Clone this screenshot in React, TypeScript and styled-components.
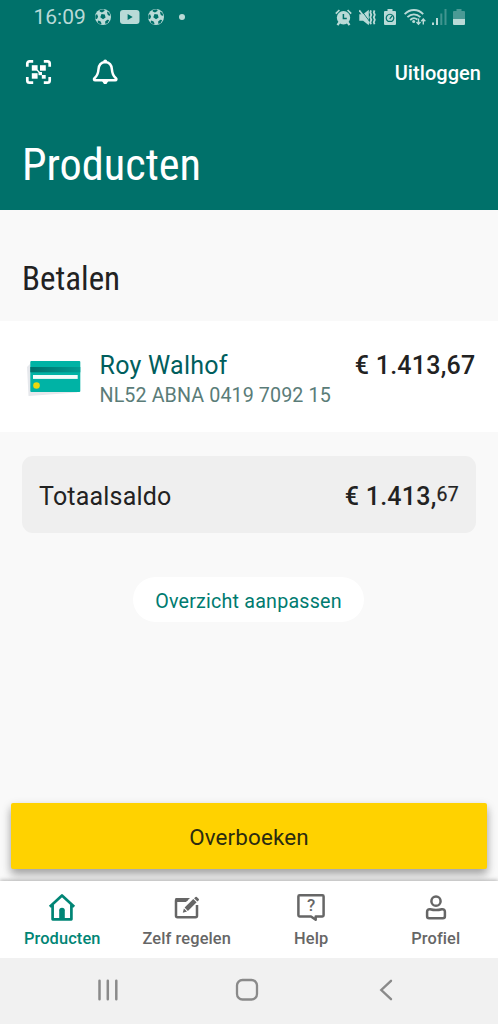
import React from "react";
import styled, { createGlobalStyle } from "styled-components";

const Global = createGlobalStyle`
  * { box-sizing: border-box; }
  html, body { margin: 0; padding: 0; }
  body { font-family: Roboto, "Liberation Sans", sans-serif; background: #f9f9f9; }
  button { font: inherit; border: 0; padding: 0; background: none; color: inherit; cursor: pointer; }
  svg { display: block; flex: none; }
`;

const Screen = styled.div`
  width: 498px;
  height: 1024px;
  display: flex;
  flex-direction: column;
  background: #f9f9f9;
  color: #222;
  overflow: hidden;
`;

const Header = styled.header`
  height: 210px;
  background: #00716a;
  color: #fff;
`;

const StatusBar = styled.div`
  height: 34px;
  padding: 0 33px 0 33.5px;
  display: flex;
  align-items: center;
  justify-content: space-between;
  color: #b9dad7;
`;

const StatusGroup = styled.div`
  display: flex;
  align-items: center;
`;

const Clock = styled.span`
  font-size: 21px;
  line-height: 36px;
  width: 61px;
`;

const Toolbar = styled.div`
  height: 76px;
  padding: 0 17px 0 25px;
  display: flex;
  align-items: center;
  gap: 40px;
`;

const Logout = styled.button`
  && { font-size: 20px; font-weight: 500; line-height: 24px; letter-spacing: 0.05px; }
  margin-left: auto;
  padding-top: 2px;
`;

const Title = styled.h1`
  margin: 30px 0 0 22px;
  font-family: "Roboto Condensed", Roboto, sans-serif;
  font-size: 44.3px;
  font-weight: 400;
  line-height: 50px;
`;

const Main = styled.main`
  flex: 1;
  display: flex;
  flex-direction: column;
`;

const SectionTitle = styled.h2`
  margin: 50px 0 23px 22px;
  font-family: "Roboto Condensed", Roboto, sans-serif;
  font-size: 33px;
  font-weight: 400;
  line-height: 38px;
`;

const AccountRow = styled.section`
  height: 111px;
  padding: 30px 22.5px 0 27px;
  display: flex;
  align-items: flex-start;
  background: #fff;
`;

const CardPicture = styled.div`
  width: 72.5px;
  padding-top: 7px;
`;

const AccountText = styled.div`
  flex: 1;
`;

const Name = styled.div`
  font-size: 25px;
  line-height: 30px;
  letter-spacing: 0.25px;
  color: #005e5d;
`;

const Iban = styled.div`
  font-size: 19.7px;
  line-height: 30px;
  letter-spacing: 0.1px;
  color: #5a7c78;
`;

const Amount = styled.div`
  display: flex;
  font-size: 25px;
  font-weight: 500;
  line-height: 30px;
  letter-spacing: 0.25px;
`;

const Cents = styled.span`
  font-size: 19.5px;
  font-weight: 400;
  line-height: 26px;
  -webkit-text-stroke: 0.25px currentColor;
`;

const TotalBox = styled.section`
  margin: 24px 22px 0;
  height: 77px;
  padding: 5px 17px 0 17px;
  display: flex;
  align-items: center;
  justify-content: space-between;
  background: #efefef;
  border-radius: 11px;
`;

const TotalLabel = styled.span`
  font-size: 25px;
  line-height: 30px;
  letter-spacing: 0.2px;
`;

const Pill = styled.button`
  && { font-size: 19.7px; line-height: 24px; letter-spacing: 0.2px; color: #007b70; }
  align-self: center;
  margin: 44px 1px 0 0;
  width: 231px;
  height: 45px;
  padding-top: 5px;
  background: #fff;
  border-radius: 23px;
`;

const Transfer = styled.button`
  && { font-size: 22.4px; line-height: 28px; letter-spacing: 0.15px; color: #2b2b10; background: #ffd200; }
  margin: auto 11px 12px;
  height: 66px;
  padding-top: 2px;
  border-radius: 2px;
  box-shadow: 0 4px 10px rgba(0, 0, 0, 0.28), 0 7px 8px rgba(0, 0, 0, 0.12);
`;

const Tabs = styled.nav`
  height: 77px;
  display: flex;
  background: #fff;
  box-shadow: 0 -1px 4px rgba(0, 0, 0, 0.28);
`;

const Tab = styled.button<{ $active?: boolean }>`
  && { color: ${(p) => (p.$active ? "#008575" : "#666")}; }
  flex: 1;
  display: flex;
  flex-direction: column;
  align-items: center;
  justify-content: flex-start;
  padding-top: 11px;
`;

const TabLabel = styled.span`
  margin-top: 7px;
  font-size: 16.4px;
  font-weight: 500;
  line-height: 20px;
  letter-spacing: 0.12px;
`;

const SystemBar = styled.footer`
  height: 66px;
  padding: 0 105px 3px 97px;
  display: grid;
  grid-template-columns: 138px 1fr auto;
  align-items: center;
  background: #f1f1f1;
`;

const Ball = () => (
  <svg width="17" height="17" viewBox="0 0 17 17">
    <circle cx="8" cy="8" r="8" fill="#b9dad7" />
    <g fill="#00716a">
      <path d="M6.500 5.100l3.300.3.800 3-2.600 1.900-2.700-2z" />
      <path d="M4.700 1.100l3.800-.9 1.300 1.600L7 3.400l-2.300-.9zM12.700 2.600l2.300 2.500-.2 2-2-1.200-.8-2.500zM.3 6.800l1.700-1.800 1.100 2.800L2 9.900l-1.600-.2zM3 11.600l2.400.6 1.200 2.400-1 .9-3-2zM10.100 12.500l2.200-1.700 1.900.3-1.500 2.800-2.300 1.100z" />
    </g>
  </svg>
);

const YouTube = () => (
  <svg width="20" height="14" viewBox="0 0 20 14">
    <rect width="19.500" height="14" rx="3" fill="#b9dad7" />
    <path d="M7.600 3.900v6.200L12.700 7z" fill="#00716a" />
  </svg>
);

const StatusLeftIcons = styled.div`
  display: flex;
  align-items: center;
  gap: 8px;
`;

const Dot = styled.i`
  width: 6px;
  height: 6px;
  margin-left: 6px;
  border-radius: 50%;
  background: currentColor;
`;

const AlarmIcon = () => (
  <svg width="17" height="17" viewBox="0 0 17 17" fill="currentColor">
    <circle cx="8.500" cy="8.800" r="6.700" />
    <path d="M.8 4.700L4.400 1M16.200 4.700L12.600 1" stroke="currentColor" strokeWidth="1.700" />
    <path d="M4.300 13.500l-1.800 2.600M12.700 13.500l1.800 2.600" stroke="currentColor" strokeWidth="2.200" />
    <path d="M8.400 5v4.500h3.400" fill="none" stroke="#00716a" strokeWidth="1.500" />
  </svg>
);

const MuteIcon = () => (
  <svg width="17" height="17" viewBox="0 0 17 17">
    <path d="M.3 5.300h3.800L9.800.8v15.400l-5.700-4.400H.3z" fill="currentColor" />
    <path d="M1.500 .3L11 13" stroke="#00716a" strokeWidth=".9" />
    <path d="M.3 1.200L10.200 14.500" stroke="currentColor" strokeWidth="1.600" />
    <path d="M12 1.400l-.7 2 1 2.400-1 2.500 1 2.500-1 2.500.7 2M15.500 1.400l-.7 2 1 2.400-1 2.500 1 2.500-1 2.500.7 2" fill="none" stroke="currentColor" strokeWidth="1.800" />
  </svg>
);

const SaverIcon = () => (
  <svg width="12" height="17" viewBox="0 0 12 17">
    <path d="M3.500 0h5v2H11a1 1 0 0 1 1 1v12a1 1 0 0 1-1 1H1a1 1 0 0 1-1-1V3a1 1 0 0 1 1-1h2.500z" fill="currentColor" />
    <path d="M4 12.300a3.800 3.800 0 1 1 4 0zM5.700 9.800L8 7" fill="none" stroke="#00716a" strokeWidth="1.200" />
  </svg>
);

const WifiIcon = () => (
  <svg width="22" height="17" viewBox="0 0 22 17" fill="none" stroke="currentColor" strokeWidth="1.800">
    <path d="M.6 5.200C6-.4 14-.4 19.200 5.200M3.400 8.200c3.800-3.900 9.200-3.900 13 0M6.200 11c2.200-2.200 4.800-2.300 7.200-.5" />
    <circle cx="9.700" cy="12.600" r="1.500" fill="currentColor" stroke="none" />
    <path d="M14.500 9.500v5.500m-2-2l2 2.200 2-2.200M19.300 15.500v-5.200m-2 2l2-2.200 2 2.200" strokeWidth="1.400" />
  </svg>
);

const SignalIcon = () => (
  <svg width="15" height="17" viewBox="0 0 15 17" fill="currentColor">
    <rect y="13.500" width="2" height="2.500" />
    <rect x="4" y="9" width="2" height="7" />
    <rect x="8.300" y="4.500" width="2" height="11.500" opacity=".35" />
    <rect x="12.500" y="0" width="2" height="16" opacity=".35" />
  </svg>
);

const BatteryIcon = () => (
  <svg width="12" height="17" viewBox="0 0 12 17" fill="currentColor">
    <path d="M3.500 0h5v2H11a1 1 0 0 1 1 1v7H0V3a1 1 0 0 1 1-1h2.500z" opacity=".4" />
    <path d="M0 10h12v5a1 1 0 0 1-1 1H1a1 1 0 0 1-1-1z" />
  </svg>
);

const StatusRightIcons = styled.div`
  display: grid;
  grid-template-columns: 24px 25px 20px 28px 21px 12px;
  align-items: center;
`;

const QrIcon = () => (
  <svg width="27" height="26" viewBox="0 0 27 26" fill="#fff">
    <path d="M2.300 7.800V4.500a2.200 2.200 0 0 1 2.200-2.200h3.700M18.800 2.300h3.700a2.200 2.200 0 0 1 2.200 2.200v3.300M24.700 18v3.500a2.200 2.200 0 0 1-2.200 2.200h-3.700M8.200 23.700H4.500a2.200 2.200 0 0 1-2.200-2.200V18" fill="none" stroke="#fff" strokeWidth="2.700" />
    <rect x="6.800" y="6.200" width="5.800" height="5.500" />
    <rect x="15" y="6.200" width="5.800" height="5.500" />
    <rect x="6.800" y="14.200" width="5.800" height="5.500" />
    <rect x="13.500" y="13" width="3.500" height="3.200" />
    <rect x="16.800" y="16" width="3.900" height="3.700" />
    <path d="M12 11l3 3" stroke="#fff" strokeWidth="1.300" />
  </svg>
);

const BellIcon = () => (
  <svg width="27" height="26" viewBox="0 0 27 26">
    <path d="M13.200 2.900c-4.600.4-6.500 3.600-6.700 7.400-.3 4.700-1.200 6.400-4 8.900-.9.900-.6 2 .7 2h20c1.300 0 1.600-1.100.7-2-2.800-2.500-3.700-4.200-4-8.900-.2-3.800-2.100-7-6.700-7.400z" fill="none" stroke="#fff" strokeWidth="2.500" />
    <path d="M11.200 2.400a2 2 0 0 1 4 0zM10 22h6.400l-2 2.900H12z" fill="#fff" />
  </svg>
);

const CardArt = () => (
  <svg width="56" height="40" viewBox="0 0 56 40">
    <defs>
      <linearGradient id="cardStripe">
        <stop stopColor="#006f6b" />
        <stop offset="1" stopColor="#009e93" />
      </linearGradient>
    </defs>
    <path d="M0 9l4-4 47 28-1 1.500L1.500 38z" fill="#e6e8ec" />
    <rect x="3.300" y="3" width="50" height="31" rx="1" fill="#00b3a5" />
    <rect x="3.300" y="9" width="50" height="5.300" fill="url(#cardStripe)" />
    <rect x="6" y="17" width="44.700" height="3.900" fill="#f2fcfa" />
    <circle cx="9.500" cy="27.500" r="3.300" fill="#ead80c" />
  </svg>
);

const HomeIcon = () => (
  <svg width="28" height="30" viewBox="0 0 28 30" fill="none" stroke="currentColor" strokeWidth="2.700">
    <path d="M1.800 14.700L14 3.500l12.200 11.200M4.600 13v14.300h18.800V13" strokeLinejoin="round" />
    <path d="M11.200 27.500V18.200q0-2.500 2.800-2.500t2.800 2.500v9.300z" fill="currentColor" stroke="none" />
  </svg>
);

const EditIcon = () => (
  <svg width="28" height="30" viewBox="0 0 28 30">
    <path d="M15 7.200H4.500a1.500 1.500 0 0 0-1.500 1.500v15.100a1.500 1.500 0 0 0 1.500 1.500h18a1.500 1.500 0 0 0 1.500-1.500V13" fill="none" stroke="currentColor" strokeWidth="2.500" />
    <path d="M2.500 6h14.500L13 10H2.500z" fill="currentColor" />
    <path d="M11.600 15.600L20.300 7l3.300 3.300-8.700 8.600z" fill="currentColor" />
    <path d="M21.100 6.200l1.400-1.300q.7-.5 1.300 0l2 2q.5.600 0 1.300l-1.400 1.300zM10.900 16.500l3.100 3.100-4.200 1.200z" fill="currentColor" />
  </svg>
);

const HelpMark = styled.span`
  grid-area: 1 / 1;
  font-size: 17px;
  font-weight: 500;
  line-height: 27px;
`;

const HelpFrame = styled.span`
  display: grid;
  justify-items: center;
  align-items: start;
  height: 30px;
  > svg { grid-area: 1 / 1; }
`;

const HelpIcon = () => (
  <HelpFrame>
    <svg width="28" height="30" viewBox="0 0 28 30">
      <path d="M2.600 3.200h22.800a1.200 1.200 0 0 1 1.200 1.200v18.800a1.200 1.200 0 0 1-1.200 1.200h-6.700v3.300l-4.700-3.300H2.600a1.200 1.200 0 0 1-1.200-1.200V4.400a1.200 1.200 0 0 1 1.200-1.200z" fill="none" stroke="currentColor" strokeWidth="2.500" strokeLinejoin="round" />
    </svg>
    <HelpMark>?</HelpMark>
  </HelpFrame>
);

const ProfileIcon = () => (
  <svg width="28" height="30" viewBox="0 0 28 30" fill="none" stroke="currentColor" strokeWidth="2.500">
    <circle cx="14" cy="9.200" r="4.600" />
    <path d="M8.300 17.300c3.600 1 7.800 1 11.400 0 2-.4 3.200.8 3.200 2.400v4.500q0 2-2 2H7.100q-2 0-2-2v-4.500c0-1.600 1.200-2.800 3.200-2.400z" />
  </svg>
);

const RecentsIcon = () => (
  <svg width="22" height="22" viewBox="0 0 22 22" stroke="#8a8a8a" strokeWidth="2.500" strokeLinecap="round">
    <path d="M2.500 1.800v18.400M10.800 1.800v18.400M19.300 1.800v18.400" />
  </svg>
);

const SystemHomeIcon = () => (
  <svg width="24" height="24" viewBox="0 0 24 24">
    <rect x="2" y="2" width="20" height="19.500" rx="5.500" fill="none" stroke="#8a8a8a" strokeWidth="2.300" />
  </svg>
);

const BackIcon = () => (
  <svg width="14" height="22" viewBox="0 0 14 22">
    <path d="M12 1.800L2.300 11l9.700 9.200" fill="none" stroke="#8a8a8a" strokeWidth="2.400" strokeLinecap="round" />
  </svg>
);

const tabs = [
  { label: "Producten", Icon: HomeIcon },
  { label: "Zelf regelen", Icon: EditIcon },
  { label: "Help", Icon: HelpIcon },
  { label: "Profiel", Icon: ProfileIcon },
];

export default function App() {
  return (
    <>
      <Global />
      <Screen>
        <Header>
          <StatusBar>
            <StatusGroup>
              <Clock>16:09</Clock>
              <StatusLeftIcons>
                <Ball />
                <YouTube />
                <Ball />
                <Dot />
              </StatusLeftIcons>
            </StatusGroup>
            <StatusRightIcons>
              <AlarmIcon />
              <MuteIcon />
              <SaverIcon />
              <WifiIcon />
              <SignalIcon />
              <BatteryIcon />
            </StatusRightIcons>
          </StatusBar>
          <Toolbar>
            <QrIcon />
            <BellIcon />
            <Logout>Uitloggen</Logout>
          </Toolbar>
          <Title>Producten</Title>
        </Header>
        <Main>
          <SectionTitle>Betalen</SectionTitle>
          <AccountRow>
            <CardPicture>
              <CardArt />
            </CardPicture>
            <AccountText>
              <Name>Roy Walhof</Name>
              <Iban>NL52 ABNA 0419 7092 15</Iban>
            </AccountText>
            <Amount>€ 1.413,67</Amount>
          </AccountRow>
          <TotalBox>
            <TotalLabel>Totaalsaldo</TotalLabel>
            <Amount>
              € 1.413,<Cents>67</Cents>
            </Amount>
          </TotalBox>
          <Pill>Overzicht aanpassen</Pill>
          <Transfer>Overboeken</Transfer>
        </Main>
        <Tabs>
          {tabs.map(({ label, Icon }, i) => (
            <Tab key={label} $active={i === 0}>
              <Icon />
              <TabLabel>{label}</TabLabel>
            </Tab>
          ))}
        </Tabs>
        <SystemBar>
          <RecentsIcon />
          <SystemHomeIcon />
          <BackIcon />
        </SystemBar>
      </Screen>
    </>
  );
}
